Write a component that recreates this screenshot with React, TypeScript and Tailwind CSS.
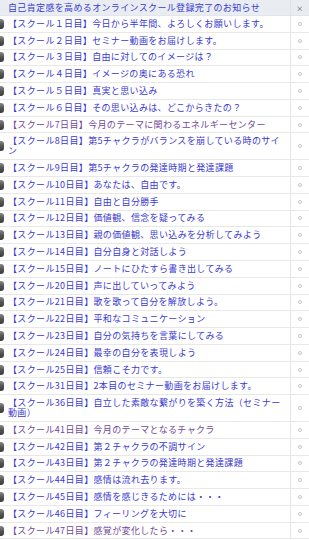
import React from "react";

type Item = { title: string; visited?: boolean };

const items: Item[] = [
  { title: "【スクール１日目】今日から半年間、よろしくお願いします。" },
  { title: "【スクール２日目】セミナー動画をお届けします。" },
  { title: "【スクール３日目】自由に対してのイメージは？" },
  { title: "【スクール４日目】イメージの奥にある恐れ" },
  { title: "【スクール５日目】真実と思い込み" },
  { title: "【スクール６日目】その思い込みは、どこからきたの？" },
  { title: "【スクール7日目】今月のテーマに関わるエネルギーセンター", visited: true },
  { title: "【スクール8日目】第5チャクラがバランスを崩している時のサイン" },
  { title: "【スクール9日目】第5チャクラの発達時期と発達課題" },
  { title: "【スクール10日目】あなたは、自由です。" },
  { title: "【スクール11日目】自由と自分勝手" },
  { title: "【スクール12日目】価値観、信念を疑ってみる" },
  { title: "【スクール13日目】親の価値観、思い込みを分析してみよう" },
  { title: "【スクール14日目】自分自身と対話しよう" },
  { title: "【スクール15日目】ノートにひたすら書き出してみる" },
  { title: "【スクール20日目】声に出していってみよう" },
  { title: "【スクール21日目】歌を歌って自分を解放しよう。" },
  { title: "【スクール22日目】平和なコミュニケーション" },
  { title: "【スクール23日目】自分の気持ちを言葉にしてみる" },
  { title: "【スクール24日目】最幸の自分を表現しよう" },
  { title: "【スクール25日目】信頼こそ力です。" },
  { title: "【スクール31日目】2本目のセミナー動画をお届けします。" },
  { title: "【スクール36日目】自立した素敵な繋がりを築く方法（セミナー動画）" },
  { title: "【スクール41日目】今月のテーマとなるチャクラ", visited: true },
  { title: "【スクール42日目】第２チャクラの不調サイン" },
  { title: "【スクール43日目】第２チャクラの発達時期と発達課題" },
  { title: "【スクール44日目】感情は流れ去ります。" },
  { title: "【スクール45日目】感情を感じきるためには・・・" },
  { title: "【スクール46日目】フィーリングを大切に" },
  { title: "【スクール47日目】感覚が変化したら・・・", visited: true },
];

function Bullet() {
  return (
    <div className="shrink-0 w-[4px] h-[10px] rounded-r-[3px] bg-gradient-to-b from-[#8a8a8a] via-[#555] to-[#3c3c3c]" />
  );
}

export default function App() {
  return (
    <div
      className="w-[309px] min-h-[540px] bg-white overflow-hidden text-[9px] leading-[10px] tracking-[0.35px]"
      style={{ fontFamily: '"Noto Sans CJK JP", "Noto Sans", sans-serif' }}
    >
      <div className="flex h-[16px] bg-[#e9edf2] border-b border-[#e2e5e9]">
        <div className="flex-1 flex items-center pl-[8px] text-[#3a3ad0]">
          自己肯定感を高めるオンラインスクール登録完了のお知らせ
        </div>
        <div className="w-[19px] flex items-center justify-center border-l border-[#dfe2e6] text-[7px] text-[#444]">
          ×
        </div>
      </div>

      {items.map((item) => (
        <div key={item.title} className="flex border-b border-[#e8e8e8]">
          <div className="flex-1 flex items-center gap-[4px] py-[2.9px] pr-[4px]">
            <Bullet />
            <span className={item.visited ? "text-[#72479a]" : "text-[#3a3ad0]"}>
              {item.title}
            </span>
          </div>
          <div className="w-[19px] shrink-0 flex items-center justify-center border-l border-[#e6e6e6]">
            <span className="w-[4px] h-[4px] rounded-full border border-[#c8c8c8]" />
          </div>
        </div>
      ))}
    </div>
  );
}
